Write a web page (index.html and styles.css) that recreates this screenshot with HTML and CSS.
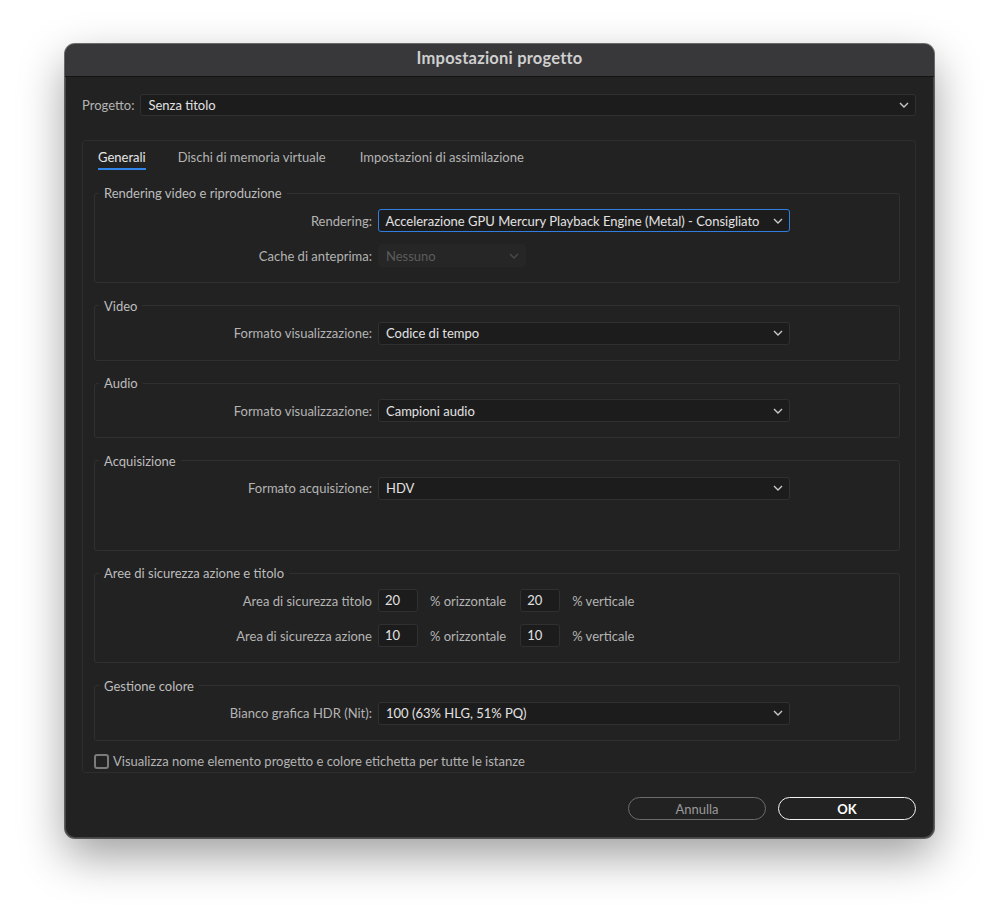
FILE: index.html
```html
<!DOCTYPE html>
<html lang="it">
<head>
<meta charset="utf-8">
<title>Impostazioni progetto</title>
<link rel="stylesheet" href="styles.css">
</head>
<body>
<div class="window">
  <div class="titlebar">Impostazioni progetto</div>
  <div class="body">
    <div class="project-row">
      <span class="label">Progetto:</span>
      <div class="select project-select"><span>Senza titolo</span><svg class="chev" viewBox="0 0 10 6"><path d="M1 1 L5 5 L9 1"/></svg></div>
    </div>
    <div class="panel">
      <div class="tabs">
        <span class="tab active">Generali</span>
        <span class="tab t2">Dischi di memoria virtuale</span>
        <span class="tab">Impostazioni di assimilazione</span>
      </div>
      <div class="groups">
        <fieldset class="group">
          <legend>Rendering video e riproduzione</legend>
          <div class="row">
            <span class="rlabel">Rendering:</span>
            <div class="select wide focus"><span>Accelerazione GPU Mercury Playback Engine (Metal) - Consigliato</span><svg class="chev" viewBox="0 0 10 6"><path d="M1 1 L5 5 L9 1"/></svg></div>
          </div>
          <div class="row">
            <span class="rlabel">Cache di anteprima:</span>
            <div class="select small disabled"><span>Nessuno</span><svg class="chev" viewBox="0 0 10 6"><path d="M1 1 L5 5 L9 1"/></svg></div>
          </div>
        </fieldset>
        <fieldset class="group">
          <legend>Video</legend>
          <div class="row">
            <span class="rlabel">Formato visualizzazione:</span>
            <div class="select wide"><span>Codice di tempo</span><svg class="chev" viewBox="0 0 10 6"><path d="M1 1 L5 5 L9 1"/></svg></div>
          </div>
        </fieldset>
        <fieldset class="group">
          <legend>Audio</legend>
          <div class="row">
            <span class="rlabel">Formato visualizzazione:</span>
            <div class="select wide"><span>Campioni audio</span><svg class="chev" viewBox="0 0 10 6"><path d="M1 1 L5 5 L9 1"/></svg></div>
          </div>
        </fieldset>
        <fieldset class="group tall">
          <legend>Acquisizione</legend>
          <div class="row">
            <span class="rlabel">Formato acquisizione:</span>
            <div class="select wide"><span>HDV</span><svg class="chev" viewBox="0 0 10 6"><path d="M1 1 L5 5 L9 1"/></svg></div>
          </div>
        </fieldset>
        <fieldset class="group">
          <legend>Aree di sicurezza azione e titolo</legend>
          <div class="row">
            <span class="rlabel">Area di sicurezza titolo</span>
            <div class="num">20</div>
            <span class="unit">% orizzontale</span>
            <div class="num">20</div>
            <span class="unit">% verticale</span>
          </div>
          <div class="row">
            <span class="rlabel">Area di sicurezza azione</span>
            <div class="num">10</div>
            <span class="unit">% orizzontale</span>
            <div class="num">10</div>
            <span class="unit">% verticale</span>
          </div>
        </fieldset>
        <fieldset class="group">
          <legend>Gestione colore</legend>
          <div class="row">
            <span class="rlabel">Bianco grafica HDR (Nit):</span>
            <div class="select wide"><span>100 (63% HLG, 51% PQ)</span><svg class="chev" viewBox="0 0 10 6"><path d="M1 1 L5 5 L9 1"/></svg></div>
          </div>
        </fieldset>
      </div>
      <label class="check"><span class="box"></span><span>Visualizza nome elemento progetto e colore etichetta per tutte le istanze</span></label>
    </div>
    <div class="buttons">
      <button class="btn cancel">Annulla</button>
      <button class="btn ok">OK</button>
    </div>
  </div>
</div>
</body>
</html>
```

FILE: styles.css
```css
* { box-sizing: border-box; }
html, body { margin: 0; padding: 0; }
body {
  background: #ffffff;
  font-family: Lato, "Noto Sans", sans-serif;
  font-size: 13px;
  width: 999px;
  height: 924px;
  overflow: hidden;
}
.window {
  margin: 44px 0 0 65px;
  width: 869px;
  height: 794px;
  border-radius: 10px;
  background: #222222;
  box-shadow: 0 0 0 1px rgba(0,0,0,0.55), inset 0 0 0 1px rgba(255,255,255,0.16), 0 18px 45px rgba(0,0,0,0.38);
  display: flex;
  flex-direction: column;
  overflow: hidden;
}
.titlebar {
  height: 33px;
  flex: none;
  background: #38383a;
  border-bottom: 1px solid #141414;
  color: #cfcfcf;
  font-weight: bold;
  font-size: 16.5px;
  letter-spacing: 0.2px;
  display: flex;
  align-items: center;
  justify-content: center;
  padding-bottom: 4px;
}
.body {
  flex: 1;
  padding: 17px 18px 0 17px;
  display: flex;
  flex-direction: column;
}
.project-row {
  display: flex;
  align-items: center;
  height: 22px;
}
.label { color: #b4b4b4; margin-right: 6px; }
.select {
  height: 23px;
  background: #1c1c1c;
  border: 1px solid #303030;
  border-radius: 3px;
  display: flex;
  align-items: center;
  justify-content: space-between;
  padding: 0 6px 0 7px;
  color: #e2e2e2;
}
.project-select { flex: 1; height: 22px; }
.chev {
  width: 10px;
  height: 6px;
  fill: none;
  stroke: #c8c8c8;
  stroke-width: 1.4;
}
.panel {
  margin-top: 24px;
  height: 633px;
  border: 1px solid #2d2d2d;
  border-radius: 3px;
  padding: 0 15px 0 11px;
  display: flex;
  flex-direction: column;
}
.tabs {
  display: flex;
  padding-left: 4px;
  height: 44px;
  padding-top: 8px;
}
.tab {
  color: #b4b4b4;
  margin-right: 32px;
  height: 21px;
  line-height: 16px;
}
.tab.t2 { margin-right: 34px; }
.tab.active {
  color: #e6e6e6;
  border-bottom: 2px solid #2f86e8;
}
.groups {
  display: flex;
  flex-direction: column;
  gap: 14.5px;
}
.group {
  margin: 0;
  border: 1px solid #303030;
  border-radius: 3px;
  padding: 8px 0 15px 0;
  display: flex;
  flex-direction: column;
  gap: 12px;
}
.group.tall { padding-bottom: 50px; }
.group legend {
  color: #bdbdbd;
  padding: 0 5px;
  margin-left: 4px;
  line-height: 16px;
}
.row {
  display: flex;
  align-items: center;
  height: 23px;
}
.rlabel {
  width: 277px;
  text-align: right;
  margin-right: 6px;
  color: #b4b4b4;
  flex: none;
}
.wide { width: 412px; }
.focus {
  border: 1.5px solid #2f7ee0;
  padding-left: 6.5px;
}
.small { width: 148px; }
.disabled {
  background: #262626;
  border-color: #262626;
  color: #5c5c5c;
}
.disabled .chev { stroke: #4a4a4a; }
.num {
  width: 40px;
  height: 23px;
  background: #1c1c1c;
  border: 1px solid #303030;
  border-radius: 3px;
  color: #e2e2e2;
  padding-left: 6px;
  line-height: 21px;
}
.unit {
  color: #b4b4b4;
  margin: 0 14px 0 12px;
}
.check {
  display: flex;
  align-items: center;
  margin-top: 13px;
  color: #b4b4b4;
  height: 15px;
}
.box {
  width: 15px;
  height: 15px;
  border: 2px solid #7b7b7b;
  border-radius: 3px;
  margin-right: 4px;
  flex: none;
}
.buttons {
  display: flex;
  justify-content: flex-end;
  gap: 12px;
  margin-top: 24px;
}
.btn {
  width: 138px;
  height: 23px;
  border-radius: 12px;
  background: transparent;
  font-family: Lato, "Noto Sans", sans-serif;
  font-size: 13px;
  padding: 0;
}
.cancel {
  border: 1.5px solid #6c6c6c;
  color: #9a9a9a;
}
.ok {
  border: 1.5px solid #f2f2f2;
  color: #ffffff;
  font-weight: bold;
}
```
